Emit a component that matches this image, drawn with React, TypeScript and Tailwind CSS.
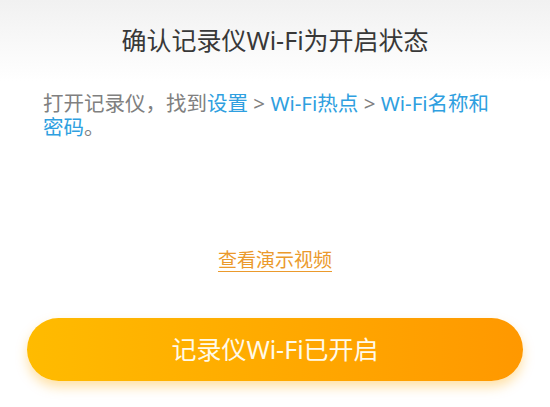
const font = "font-['Noto_Sans','Noto_Sans_CJK_SC',sans-serif]"

export default function App() {
  return (
    <div className={`${font} flex h-[407px] w-[550px] flex-col bg-linear-to-b from-[#f1f1f1] via-white via-20% to-white`}>
      <h1 className="pt-[24px] text-center text-[25px] leading-[32px] text-[#383838]">确认记录仪Wi-Fi为开启状态</h1>
      <p className="mt-[35px] px-[43px] text-[20.5px] leading-[24px] text-[#808080]">
        打开记录仪，找到<span className="text-[#2f9fe0]">设置</span> &gt;{' '}
        <span className="text-[#2f9fe0]">Wi-Fi热点</span> &gt;{' '}
        <span className="text-[#2f9fe0]">Wi-Fi名称和</span>
        <br />
        <span className="text-[#2f9fe0]">密码</span>。
      </p>
      <div className="mt-[108px] flex justify-center">
        <a className="text-[19px] leading-[26px] text-[#eb9a2c] underline underline-offset-[4px]">查看演示视频</a>
      </div>
      <div className="mt-[45px] px-[27px]">
        <button className="flex h-[63px] w-full items-center justify-center rounded-full bg-linear-to-r from-[#ffbb00] to-[#ff9800] text-[25px] text-[#fffaea] shadow-[0_6px_12px_rgba(255,170,0,0.35)]">
          记录仪Wi-Fi已开启
        </button>
      </div>
    </div>
  )
}
